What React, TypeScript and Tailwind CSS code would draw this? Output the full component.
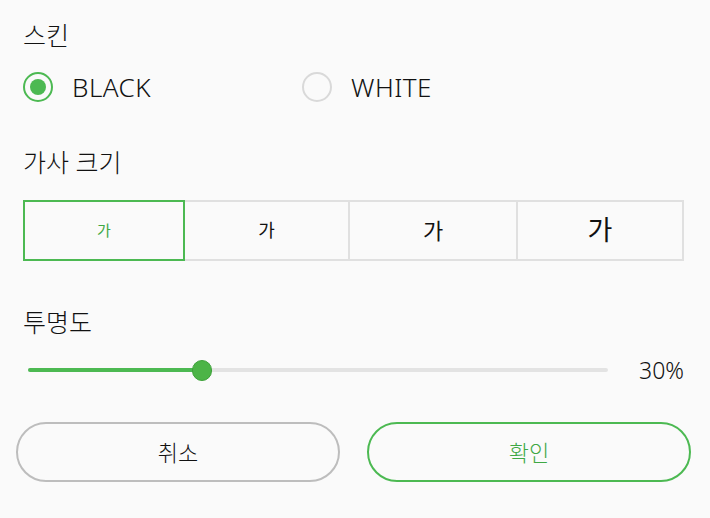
import { useState } from 'react'

const sizes = [
  { id: 0, cls: 'text-[15px]', w: 'w-[162px]' },
  { id: 1, cls: 'text-[18px]', w: 'w-[167px]' },
  { id: 2, cls: 'text-[22px]', w: 'w-[170px]' },
  { id: 3, cls: 'text-[27px]', w: 'w-[168px]' },
]

export default function App() {
  const [skin, setSkin] = useState('BLACK')
  const [size, setSize] = useState(0)
  const opacity = 30

  return (
    <div
      className="w-[710px] h-[518px] bg-[#fafafa] text-[#111] overflow-hidden font-light"
      style={{ fontFamily: '"Noto Sans", "Noto Sans CJK KR", sans-serif' }}
    >
      <div className="pl-[23px] pr-[26px]">
        {/* 스킨 */}
        <div className="mt-[17px] h-[36px] leading-[36px] text-[25px]">스킨</div>
        <div className="mt-[14px] h-[40px] flex items-center">
          {['BLACK', 'WHITE'].map((s) => (
            <button
              key={s}
              type="button"
              onClick={() => setSkin(s)}
              className="w-[279px] flex items-center h-full"
            >
              <span
                className={
                  'w-[30px] h-[30px] rounded-full border-2 flex items-center justify-center ' +
                  (skin === s ? 'border-[#4cb952]' : 'border-[#d9d9d9]')
                }
              >
                {skin === s && <span className="w-[16px] h-[16px] rounded-full bg-[#4cb952]" />}
              </span>
              <span className="ml-[19px] text-[26px] tracking-[0.5px]">{s}</span>
            </button>
          ))}
        </div>

        {/* 가사 크기 */}
        <div className="mt-[37px] h-[36px] leading-[36px] text-[25px]">가사 크기</div>
        <div className="mt-[20px] h-[61px] flex">
          {sizes.map((s, i) => (
            <button
              key={s.id}
              type="button"
              onClick={() => setSize(s.id)}
              className={
                'relative h-full border-2 flex items-center justify-center font-normal ' +
                s.w +
                (i > 0 ? ' -ml-[2px] ' : ' ') +
                (size === s.id
                  ? 'z-10 border-[#4cb952] text-[#3ea844]'
                  : 'border-[#e0e0e0] text-[#111]')
              }
            >
              <span className={s.cls}>가</span>
            </button>
          ))}
        </div>

        {/* 투명도 */}
        <div className="mt-[43px] h-[36px] leading-[36px] text-[25px]">투명도</div>
        <div className="mt-[15px] h-[30px] flex items-center">
          <div className="ml-[5px] w-[580px] relative h-[4px] rounded-full bg-[#e3e3e3]">
            <div
              className="absolute left-0 top-0 h-full rounded-full bg-[#4cb952]"
              style={{ width: `${opacity}%` }}
            />
            <div
              className="absolute top-1/2 w-[20px] h-[21px] -ml-[10px] -mt-[10.5px] rounded-full bg-[#4cb447] border border-[#3ea23a]"
              style={{ left: `${opacity}%` }}
            />
          </div>
          <div className="ml-auto text-[23px]">{opacity}%</div>
        </div>
      </div>

      {/* buttons */}
      <div className="mt-[37px] pl-[16px] pr-[19px] flex gap-[27px]">
        <button
          type="button"
          className="flex-1 h-[60px] rounded-full border-2 border-[#bdbdbd] text-[22px] text-[#111]"
        >
          취소
        </button>
        <button
          type="button"
          className="flex-1 h-[60px] rounded-full border-2 border-[#4cb952] text-[22px] text-[#3ea844]"
        >
          확인
        </button>
      </div>
    </div>
  )
}
